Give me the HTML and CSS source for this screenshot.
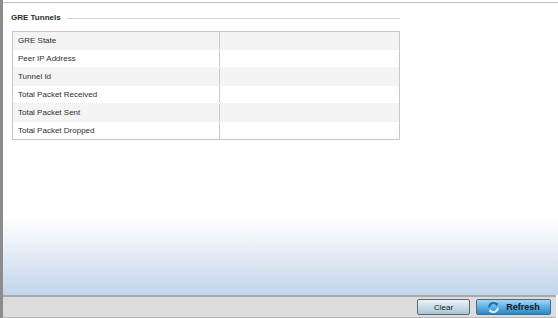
FILE: index.html
```html
<!DOCTYPE html>
<html>
<head>
    <meta charset="UTF-8">
    <meta name="viewport" content="width=device-width, initial-scale=1.0">
    <title>GRE Tunnels</title>
    <link rel="stylesheet" href="styles.css">
</head>
<body>

    <div class="frame">
        <div class="content">
            <div class="sectionHead">
                <span class="sectionTitle">GRE Tunnels</span>
                <span class="sectionRule"></span>
            </div>

            <div class="statsTable">
                <div class="statsRow odd">
                    <div class="statsLabel">GRE State</div>
                    <div class="statsValue"></div>
                </div>
                <div class="statsRow">
                    <div class="statsLabel">Peer IP Address</div>
                    <div class="statsValue"></div>
                </div>
                <div class="statsRow odd">
                    <div class="statsLabel">Tunnel Id</div>
                    <div class="statsValue"></div>
                </div>
                <div class="statsRow">
                    <div class="statsLabel">Total Packet Received</div>
                    <div class="statsValue"></div>
                </div>
                <div class="statsRow odd">
                    <div class="statsLabel">Total Packet Sent</div>
                    <div class="statsValue"></div>
                </div>
                <div class="statsRow last">
                    <div class="statsLabel">Total Packet Dropped</div>
                    <div class="statsValue"></div>
                </div>
            </div>
        </div>

        <div class="footer">
            <button class="btn btnClear">Clear</button>
            <button class="btn btnRefresh">
                <svg class="refreshIcon" width="13" height="13" viewBox="0 0 13 13">
                    <path d="M2.2 6.2 A4.3 4.3 0 0 1 9.6 3.3" fill="none" stroke="#1f6fb0" stroke-width="2"/>
                    <path d="M8.2 1.2 L11.4 2.6 L9.4 5.4 Z" fill="#1f6fb0"/>
                    <path d="M10.8 6.8 A4.3 4.3 0 0 1 3.4 9.7" fill="none" stroke="#d8ecf8" stroke-width="2"/>
                    <path d="M4.8 11.8 L1.6 10.4 L3.6 7.6 Z" fill="#d8ecf8"/>
                </svg>
                Refresh
            </button>
        </div>
    </div>

</body>
</html>
```

FILE: styles.css
```css
body {
    margin: 0;
    padding: 0;
    width: 558px;
    height: 318px;
    overflow: hidden;
    background-color: #fff;
    font-family: "Liberation Sans", Arial, sans-serif;
}

.frame {
    height: 318px;
    display: flex;
    flex-direction: column;
    border-left: 3px solid #8c8c8c;
    box-sizing: border-box;
}

.content {
    flex: 1;
    margin-top: 2px;
    border-top: 1px solid #c4c4c4;
    padding: 9px 0 0 8px;
    background: linear-gradient(to bottom, #fff 0, #fff 212px, #eef3f9 238px, #c1d5ea 292px);
}

.sectionHead {
    width: 389px;
    height: 11px;
    display: flex;
    align-items: center;
    column-gap: 6px;
}

.sectionTitle {
    font-size: 8px;
    font-weight: bold;
    color: #2a2a2a;
    white-space: nowrap;
}

.sectionRule {
    flex: 1;
    height: 1px;
    margin-top: 1px;
    background-color: #cfcfcf;
}

.statsTable {
    width: 388px;
    margin-top: 8px;
    margin-left: 1px;
    border: 1px solid #c8c8c8;
    box-sizing: border-box;
}

.statsRow {
    display: flex;
    height: 18px;
    background-color: #fff;
    border-bottom: 1px dotted #ececec;
    box-sizing: border-box;
}

.statsRow.odd {
    background-color: #f4f4f4;
}

.statsRow.last {
    height: 17px;
    border-bottom: none;
}

.statsLabel {
    width: 207px;
    padding-left: 5px;
    box-sizing: border-box;
    border-right: 1px solid #cacaca;
    font-size: 8px;
    color: #2e2e2e;
    display: flex;
    align-items: center;
}

.statsValue {
    flex: 1;
}

.footer {
    height: 23px;
    margin-right: 2px;
    border-top: 2px solid #a9a9a9;
    border-bottom: 1px solid #b4b4b4;
    background-color: #dcdcdc;
    box-sizing: border-box;
    display: flex;
    justify-content: flex-end;
    align-items: center;
    column-gap: 6px;
    padding-right: 5px;
}

.btn {
    height: 16px;
    margin: 0;
    padding: 0;
    border-radius: 2px;
    font-family: "Liberation Sans", Arial, sans-serif;
    display: flex;
    justify-content: center;
    align-items: center;
}

.btnClear {
    width: 53px;
    font-size: 8px;
    color: #1a1a1a;
    border: 1px solid #5a6670;
    background: linear-gradient(to bottom, #eaf2f7 0, #c9dce8 50%, #a9c6d6 100%);
}

.btnRefresh {
    width: 75px;
    font-size: 9px;
    font-weight: bold;
    color: #0c1a26;
    border: 1px solid #3c6e90;
    background: linear-gradient(to bottom, #a6d6f2 0, #5fb0e2 50%, #2f86c2 100%);
    column-gap: 6px;
}

.refreshIcon {
    display: block;
}
```
